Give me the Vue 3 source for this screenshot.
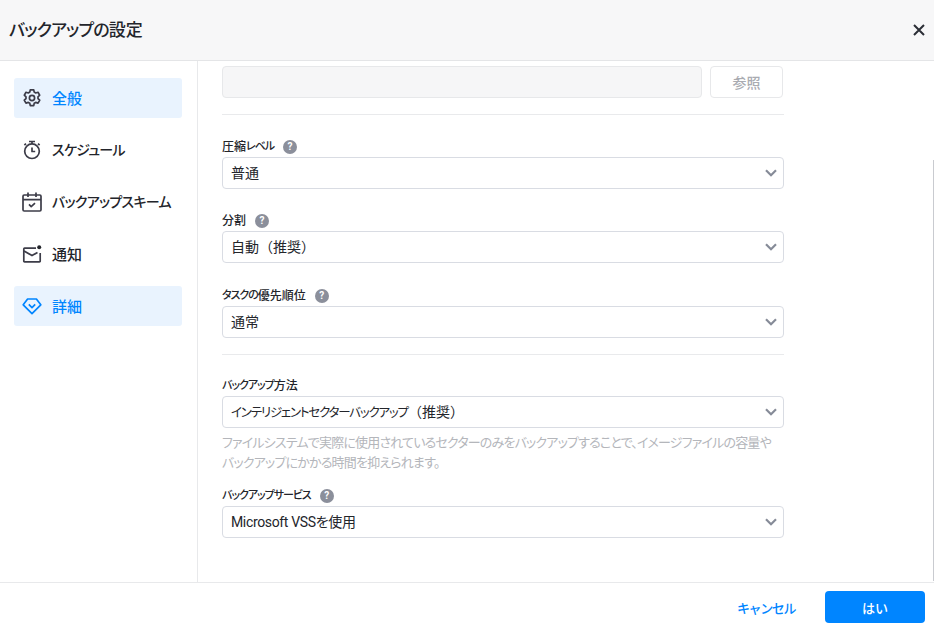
<script setup>
const nav = [
  { id: 'gear', label: '全般', active: true },
  { id: 'timer', label: 'スケジュール', kana: true },
  { id: 'cal', label: 'バックアップスキーム', kana: true },
  { id: 'mail', label: '通知' },
  { id: 'gem', label: '詳細', active: true },
]
</script>

<template>
  <div class="dialog">
    <header class="head">
      <h1><span class="tk">バックアップの</span>設定</h1>
      <svg class="close" viewBox="0 0 12 12" width="12" height="12"><path d="M1 1l10 10M11 1L1 11" /></svg>
    </header>
    <div class="body">
      <aside class="side">
        <div v-for="n in nav" :key="n.id" class="item" :class="{ active: n.active }">
          <svg class="ico" viewBox="0 0 20 20" width="20" height="20">
            <template v-if="n.id === 'gear'">
              <path d="M8.3 1.8h3.4l.5 2.3 1.5.9 2.3-.7 1.7 2.9-1.7 1.6v1.8l1.7 1.6-1.7 2.9-2.3-.7-1.5.9-.5 2.4H8.3l-.5-2.4-1.5-.9-2.3.7-1.7-2.9 1.7-1.6V8.8L2.3 7.2 4 4.3l2.3.7 1.5-.9z" />
              <circle cx="10" cy="10" r="2.6" />
            </template>
            <template v-else-if="n.id === 'timer'">
              <circle cx="10" cy="11.2" r="7.3" />
              <path d="M7 1.5h6M10 1.5v2.4M10 7.6v3.9h3.2M16 3.6l1.6 1.6M4 3.6L2.4 5.2" />
            </template>
            <template v-else-if="n.id === 'cal'">
              <rect x="1" y="3" width="18" height="16" rx="1.2" />
              <path d="M1 7.6h18M6 .6v4.4M14 .6v4.4M7 12.4l2.2 2.2 3.8-3.4" />
            </template>
            <template v-else-if="n.id === 'mail'">
              <path d="M14 4.2H2.6a.8.8 0 0 0-.8.8v12a.8.8 0 0 0 .8.8h14.8a.8.8 0 0 0 .8-.8V9" />
              <path d="M2 7l8 4.6L15.5 8.4" />
              <circle class="dot" cx="17.2" cy="3.2" r="2" />
            </template>
            <template v-else>
              <path d="M5.6 3h8.8l4.4 5.8L10 17.6 1.2 8.8z" />
              <path d="M6.8 8.4l3.2 3.2 3.2-3.2" />
            </template>
          </svg>
          <span class="item-text" :class="{ kana: n.kana }">{{ n.label }}</span>
        </div>
      </aside>
      <main class="main">
        <section class="path-row">
          <div class="path-input"></div>
          <button class="browse">参照</button>
        </section>
        <hr class="rule first" />
        <div class="field f-a">
          <div class="label">圧縮<span class="lk">レベル</span><i class="help">?</i></div>
          <div class="select"><span>普通</span><svg class="chev" viewBox="0 0 12 8" width="12" height="8"><path d="M1 1.2l5 5 5-5" /></svg></div>
        </div>
        <div class="field f-a">
          <div class="label">分割<i class="help">?</i></div>
          <div class="select"><span>自動<span class="full">（推奨）</span></span><svg class="chev" viewBox="0 0 12 8" width="12" height="8"><path d="M1 1.2l5 5 5-5" /></svg></div>
        </div>
        <div class="field f-b">
          <div class="label"><span class="lk">タスクの</span>優先順位<i class="help">?</i></div>
          <div class="select"><span>通常</span><svg class="chev" viewBox="0 0 12 8" width="12" height="8"><path d="M1 1.2l5 5 5-5" /></svg></div>
        </div>
        <hr class="rule second" />
        <div class="field f-c">
          <div class="label"><span class="lk">バックアップ</span>方法</div>
          <div class="select"><span><span class="sk">インテリジェントセクターバックアップ</span><span class="full">（推奨）</span></span><svg class="chev" viewBox="0 0 12 8" width="12" height="8"><path d="M1 1.2l5 5 5-5" /></svg></div>
          <p class="hint">ファイルシステムで実際に使用されているセクターのみをバックアップすることで、イメージファイルの容量や<br />バックアップにかかる時間を抑えられます。</p>
        </div>
        <div class="field f-d">
          <div class="label"><span class="lk">バックアップサービス</span><i class="help">?</i></div>
          <div class="select"><span class="latin">Microsoft VSSを使用</span><svg class="chev" viewBox="0 0 12 8" width="12" height="8"><path d="M1 1.2l5 5 5-5" /></svg></div>
        </div>
      </main>
      <div class="thumb"></div>
    </div>
    <footer class="foot">
      <button class="cancel">キャンセル</button>
      <button class="ok">はい</button>
    </footer>
  </div>
</template>

<style scoped>
.dialog {
  width: 934px;
  height: 634px;
  display: flex;
  flex-direction: column;
  background: #fff;
  color: #23252b;
  font-family: Roboto, "Noto Sans CJK JP", sans-serif;
  font-feature-settings: "palt";
  overflow: hidden;
}
.head {
  height: 60px;
  flex: none;
  box-sizing: content-box;
  border-bottom: 1px solid #e4e5e7;
  background: #f7f7f8;
  display: flex;
  align-items: center;
  justify-content: space-between;
  padding: 0 9px 0 9px;
}
h1 {
  margin: 0;
  font-size: 17px;
  font-weight: 500;
  line-height: 22px;
}
.tk { letter-spacing: -0.9px; }
.close { fill: none; stroke: #2b2e36; stroke-width: 2; }
.body {
  flex: 1;
  min-height: 0;
  display: flex;
  position: relative;
}
.side {
  width: 197px;
  flex: none;
  box-sizing: content-box;
  border-right: 1px solid #e8e9eb;
  padding: 17px 0 0 0;
  display: flex;
  flex-direction: column;
  gap: 12px;
  align-items: flex-start;
}
.item {
  width: 168px;
  height: 40px;
  margin-left: 14px;
  box-sizing: border-box;
  padding-left: 8px;
  display: flex;
  align-items: center;
  gap: 10px;
  border-radius: 3px;
  font-size: 15px;
  font-weight: 500;
  white-space: nowrap;
}
.item-text { padding-bottom: 2px; }
.item-text.kana { font-size: 14px; letter-spacing: -0.7px; }
.item.active { background: #e9f3fe; color: #0085ff; }
.ico { fill: none; stroke: #3c3c48; stroke-width: 1.7; flex: none; stroke-linejoin: round; }
.item:last-child .ico { stroke: #0085ff; }
.dot { fill: #23252b; stroke: none; }
.main {
  flex: 1;
  padding: 5px 0 0 24px;
  min-width: 0;
}
.path-row {
  width: 561px;
  display: flex;
  gap: 8px;
}
.path-input {
  flex: 1;
  height: 32px;
  box-sizing: border-box;
  background: #f6f6f7;
  border: 1px solid #e7e8ea;
  border-radius: 4px;
}
.browse {
  width: 73px;
  height: 32px;
  box-sizing: border-box;
  background: #fff;
  border: 1px solid #e7e8ea;
  border-radius: 4px;
  color: #a9abb1;
  font: 500 14px Roboto, "Noto Sans CJK JP", sans-serif;
  padding: 0 0 1px;
}
.rule {
  width: 562px;
  height: 1px;
  margin: 0;
  border: 0;
  background: #e9eaec;
}
.rule.first { margin-top: 16px; }
.rule.second { margin-top: 16px; }
.field { width: 562px; }
.f-a { margin-top: 22px; }
.f-b { margin-top: 23px; }
.f-c { margin-top: 21px; }
.f-d { margin-top: 13px; }
.label {
  height: 20px;
  line-height: 20px;
  font-size: 12px;
  font-weight: 500;
  display: flex;
  align-items: center;
}
.lk { font-size: 11px; letter-spacing: -1.05px; }
.help {
  width: 14px;
  height: 14px;
  margin-left: 9px;
  border-radius: 50%;
  background: #8b8f9b;
  color: #fff;
  font: 700 10px/14px Roboto, sans-serif;
  text-align: center;
}
.select {
  height: 32px;
  box-sizing: border-box;
  border: 1px solid #d9dce3;
  border-radius: 4px;
  padding: 0 6px 0 8px;
  display: flex;
  align-items: center;
  justify-content: space-between;
  font-size: 14px;
  color: #23252b;
}
.select > span { padding-bottom: 2px; }
.full { font-feature-settings: normal; }
.sk { font-size: 12.5px; letter-spacing: -1.2px; }
.latin { letter-spacing: -0.35px; }
.chev { fill: none; stroke: #868b98; stroke-width: 2.2; }
.hint {
  margin: 5px 0 0;
  font-size: 13px;
  line-height: 20px;
  letter-spacing: -0.82px;
  color: #b4b6bb;
  white-space: nowrap;
}
.thumb {
  position: absolute;
  right: 0;
  top: 99px;
  width: 1px;
  height: 421px;
  background: #c9cbd0;
}
.foot {
  flex: none;
  height: 43px;
  border-top: 1px solid #e8e9eb;
  display: flex;
  align-items: flex-start;
  justify-content: flex-end;
  padding: 8px 9px 0 0;
  gap: 30px;
}
.foot button {
  font: 500 13px Roboto, "Noto Sans CJK JP", sans-serif;
  border: 0;
  padding: 0;
  height: 32px;
}
.cancel { background: none; color: #0085ff; letter-spacing: -1.4px; }
.ok {
  width: 100px;
  border-radius: 4px;
  background: #0085ff;
  color: #fff;
}
</style>
